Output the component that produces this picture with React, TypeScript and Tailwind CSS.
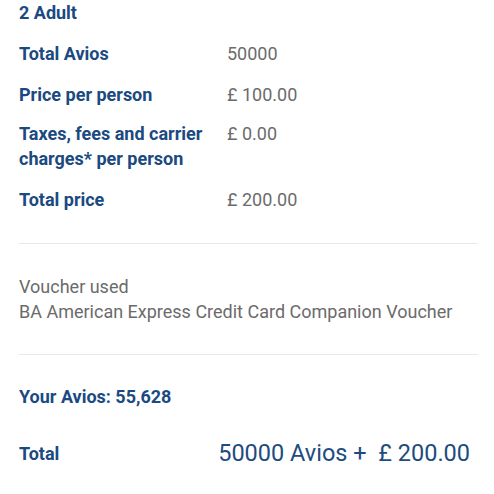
export default function App() {
  const rows = [
    { label: "Total Avios", value: "50000" },
    { label: "Price per person", value: "£ 100.00" },
    { label: "Taxes, fees and carrier charges* per person", value: "£ 0.00", tight: true },
    { label: "Total price", value: "£ 200.00" },
  ]

  return (
    <div className="min-h-screen bg-white pl-[19px] pr-4 font-['Roboto',sans-serif] text-[18px] leading-[25px]">
      <div className="flex flex-col gap-4 pb-[31px]">
        <p className="font-bold text-[#1a4a80]">2 Adult</p>
        {rows.map((row) => (
          <div key={row.label} className={`grid grid-cols-[208px_1fr] ${row.tight ? "-mt-0.5" : ""}`}>
            <p className="font-bold text-[#1a4a80] pr-1">{row.label}</p>
            <p className="text-[#6b6b6b]">{row.value}</p>
          </div>
        ))}
      </div>

      <div className="border-t border-[#e8e8e8] pt-[30px] pb-[30px] text-[#6b6b6b]">
        <p>Voucher used</p>
        <p>BA American Express Credit Card Companion Voucher</p>
      </div>

      <div className="border-t border-[#e8e8e8] pt-[29px]">
        <p className="font-bold text-[#1a4a80]">Your Avios: 55,628</p>
        <div className="mt-8 flex items-center justify-between pr-2">
          <span className="font-bold text-[#1a4a80]">Total</span>
          <span className="text-[23.5px] text-[#1d4c80]">50000 Avios +&nbsp; £ 200.00</span>
        </div>
      </div>
    </div>
  )
}
